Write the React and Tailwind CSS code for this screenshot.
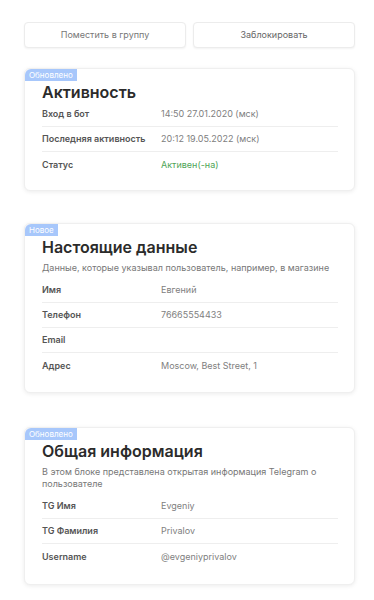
import React from "react";

const cards = [
  {
    badge: "Обновлено",
    title: "Активность",
    space: "mt-[20px] pb-[13px]",
    rows: [
      { label: "Вход в бот", value: "14:50 27.01.2020 (мск)" },
      { label: "Последняя активность", value: "20:12 19.05.2022 (мск)" },
      { label: "Статус", value: "Активен(-на)", green: true },
    ],
  },
  {
    badge: "Новое",
    title: "Настоящие данные",
    space: "mt-[32px] pb-[14px]",
    description: "Данные, которые указывал пользователь, например, в магазине",
    rows: [
      { label: "Имя", value: "Евгений" },
      { label: "Телефон", value: "76665554433" },
      { label: "Email", value: "" },
      { label: "Адрес", value: "Moscow, Best Street, 1" },
    ],
  },
  {
    badge: "Обновлено",
    title: "Общая информация",
    space: "mt-[34px] pb-[15px]",
    description:
      "В этом блоке представлена открытая информация Telegram о пользователе",
    rows: [
      { label: "TG Имя", value: "Evgeniy" },
      { label: "TG Фамилия", value: "Privalov" },
      { label: "Username", value: "@evgeniyprivalov" },
    ],
  },
];

function InfoCard({ card }) {
  return (
    <div
      className={
        "relative bg-white rounded-[6px] border border-[#efefef] shadow-[0_1px_4px_rgba(0,0,0,0.08)] pt-[13px] pl-[17px] pr-[16px] " +
        card.space
      }
    >
      {/* Badge */}
      <div className="absolute left-0 top-0 h-[12px] px-[4px] bg-[#a7c7fb] rounded-tl-[6px] text-[8px] leading-[12px] text-white">
        {card.badge}
      </div>

      <h2 className="text-[16px] leading-[20px] font-semibold text-[#2b2b2b]">
        {card.title}
      </h2>

      {card.description && (
        <p className="mt-[5px] text-[9px] leading-[12px] text-[#777]">
          {card.description}
        </p>
      )}

      <div className={card.description ? "mt-[4px]" : ""}>
        {card.rows.map((row, i) => (
          <div
            key={row.label}
            className={
              "flex items-center h-[25px] text-[9px] " +
              (i < card.rows.length - 1 ? "border-b border-[#eeeeee]" : "")
            }
          >
            <div className="w-[119px] shrink-0 font-semibold text-[#555]">
              {row.label}
            </div>
            <div className={row.green ? "text-[#4ea456]" : "text-[#808080]"}>
              {row.value}
            </div>
          </div>
        ))}
      </div>
    </div>
  );
}

export default function App() {
  return (
    <div
      className="min-h-[600px] bg-white pt-[22px] pl-6 pr-[19px] pb-4"
      style={{ fontFamily: "Inter, 'Noto Sans', sans-serif" }}
    >
      {/* Actions */}
      <div className="flex gap-[7px]">
        <button className="flex-1 h-[26px] rounded-[4px] border border-[#ececec] bg-white shadow-[0_1px_2px_rgba(0,0,0,0.05)] text-[9px] text-[#777]">
          Поместить в группу
        </button>
        <button className="flex-1 h-[26px] rounded-[4px] border border-[#ececec] bg-white shadow-[0_1px_2px_rgba(0,0,0,0.05)] text-[9px] text-[#666]">
          Заблокировать
        </button>
      </div>

      <div className="flex flex-col">
        {cards.map((card) => (
          <InfoCard key={card.title} card={card} />
        ))}
      </div>
    </div>
  );
}
